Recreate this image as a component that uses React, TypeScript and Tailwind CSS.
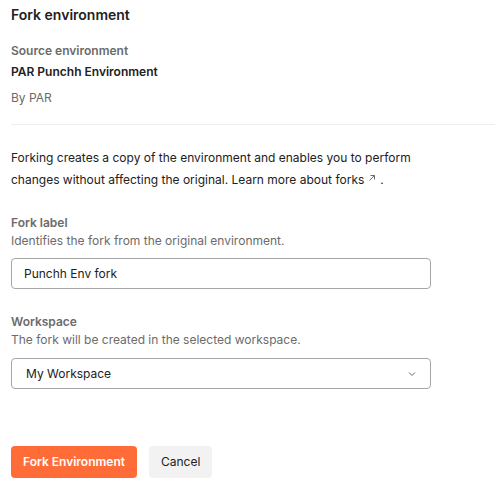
import React from "react";

export default function App() {
  return (
    <div
      className="w-[495px] h-[494px] overflow-hidden bg-white text-[#212121]"
      style={{ fontFamily: "Inter, 'Noto Sans', sans-serif" }}
    >
      <div className="pl-[11px] pt-[5px]">
        <h1 className="text-[14px] leading-[20px] font-semibold text-[#212121]">Fork environment</h1>
        <div className="mt-[18px] text-[12px] leading-[16px] font-semibold text-[#6b6b6b]">Source environment</div>
        <div className="mt-[5px] text-[12px] leading-[16px] font-semibold text-[#212121]">PAR Punchh Environment</div>
        <div className="mt-[10px] text-[12px] leading-[16px] text-[#6b6b6b]">By PAR</div>
        <div className="mt-[18px] h-px bg-[#ededed]" />
        <p className="mt-[22px] w-[420px] text-[12px] leading-[22px] text-[#212121]">
          Forking creates a copy of the environment and enables you to perform changes without affecting the original. Learn more about forks
          <span className="inline-block ml-[4px] align-[2px]">
            <svg width="8" height="8" viewBox="0 0 8 8" fill="none" stroke="#6b6b6b" strokeWidth="1">
              <path d="M1.5 6.5 L6.5 1.5 M2.5 1.5 H6.5 V5.5" />
            </svg>
          </span>
          <span className="ml-[4px]">.</span>
        </p>

        <div className="mt-[24px] w-[420px]">
          <div className="text-[12px] leading-[16px] font-semibold text-[#6b6b6b]">Fork label</div>
          <div className="mt-[2px] text-[12px] leading-[16px] text-[#6b6b6b]">Identifies the fork from the original environment.</div>
          <div className="mt-[9px] h-[31px] rounded-[4px] border border-[#a6a6a6] flex items-center px-[12px] text-[12px] text-[#212121]">
            Punchh Env fork
          </div>
        </div>

        <div className="mt-[25px] w-[420px]">
          <div className="text-[12px] leading-[16px] font-semibold text-[#6b6b6b]">Workspace</div>
          <div className="mt-[2px] text-[12px] leading-[16px] text-[#6b6b6b]">The fork will be created in the selected workspace.</div>
          <div className="mt-[10px] h-[31px] rounded-[4px] border border-[#a6a6a6] flex items-center justify-between pl-[14px] pr-[13px] text-[12px] text-[#212121]">
            <span>My Workspace</span>
            <svg width="10" height="10" viewBox="0 0 10 10" fill="none" stroke="#6b6b6b" strokeWidth="1">
              <path d="M2 3.5 L5 6.5 L8 3.5" />
            </svg>
          </div>
        </div>

        <div className="mt-[57px] flex gap-[12px]">
          <button className="h-[32px] px-[12px] rounded-[4px] bg-[#ff6c37] text-white text-[12px] font-semibold">
            Fork Environment
          </button>
          <button className="h-[32px] px-[12px] rounded-[4px] bg-[#f2f2f2] text-[#212121] text-[12px]">
            Cancel
          </button>
        </div>
      </div>
    </div>
  );
}
